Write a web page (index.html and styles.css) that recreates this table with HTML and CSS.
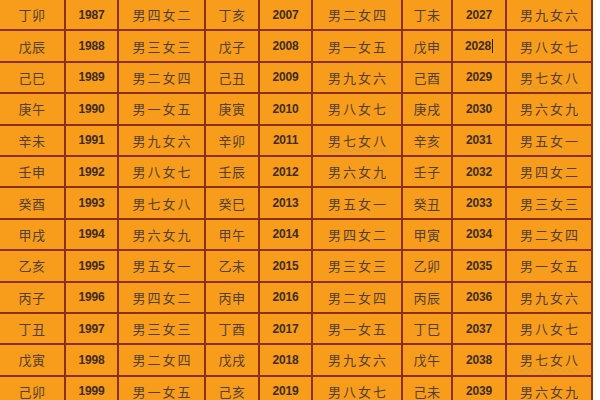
FILE: index.html
```html
<!DOCTYPE html>
<html lang="zh">
<head>
<meta charset="utf-8">
<title>生肖年份表</title>
<link rel="stylesheet" href="styles.css">
</head>
<body>
<div class="table">
  <div class="c gz">丁卯</div><div class="c yr">1987</div><div class="c fm">男四女二</div><div class="c gz">丁亥</div><div class="c yr">2007</div><div class="c fm">男二女四</div><div class="c gz">丁未</div><div class="c yr">2027</div><div class="c fm">男九女六</div>
  <div class="c gz">戊辰</div><div class="c yr">1988</div><div class="c fm">男三女三</div><div class="c gz">戊子</div><div class="c yr">2008</div><div class="c fm">男一女五</div><div class="c gz">戊申</div><div class="c yr"><span class="caret">2028</span></div><div class="c fm">男八女七</div>
  <div class="c gz">己巳</div><div class="c yr">1989</div><div class="c fm">男二女四</div><div class="c gz">己丑</div><div class="c yr">2009</div><div class="c fm">男九女六</div><div class="c gz">己酉</div><div class="c yr">2029</div><div class="c fm"><span class="sq">男七女八</span></div>
  <div class="c gz">庚午</div><div class="c yr">1990</div><div class="c fm">男一女五</div><div class="c gz">庚寅</div><div class="c yr">2010</div><div class="c fm">男八女七</div><div class="c gz">庚戌</div><div class="c yr">2030</div><div class="c fm">男六女九</div>
  <div class="c gz">辛未</div><div class="c yr">1991</div><div class="c fm">男九女六</div><div class="c gz">辛卯</div><div class="c yr">2011</div><div class="c fm"><span class="sq">男七女八</span></div><div class="c gz">辛亥</div><div class="c yr">2031</div><div class="c fm">男五女一</div>
  <div class="c gz">壬申</div><div class="c yr">1992</div><div class="c fm">男八女七</div><div class="c gz">壬辰</div><div class="c yr">2012</div><div class="c fm"><span class="sq">男六女九</span></div><div class="c gz">壬子</div><div class="c yr">2032</div><div class="c fm">男四女二</div>
  <div class="c gz">癸酉</div><div class="c yr">1993</div><div class="c fm">男七女八</div><div class="c gz">癸巳</div><div class="c yr">2013</div><div class="c fm">男五女一</div><div class="c gz">癸丑</div><div class="c yr">2033</div><div class="c fm">男三女三</div>
  <div class="c gz">甲戌</div><div class="c yr">1994</div><div class="c fm">男六女九</div><div class="c gz">甲午</div><div class="c yr">2014</div><div class="c fm">男四女二</div><div class="c gz">甲寅</div><div class="c yr">2034</div><div class="c fm">男二女四</div>
  <div class="c gz">乙亥</div><div class="c yr">1995</div><div class="c fm">男五女一</div><div class="c gz">乙未</div><div class="c yr">2015</div><div class="c fm">男三女三</div><div class="c gz">乙卯</div><div class="c yr">2035</div><div class="c fm">男一女五</div>
  <div class="c gz">丙子</div><div class="c yr">1996</div><div class="c fm">男四女二</div><div class="c gz">丙申</div><div class="c yr">2016</div><div class="c fm">男二女四</div><div class="c gz">丙辰</div><div class="c yr">2036</div><div class="c fm">男九女六</div>
  <div class="c gz">丁丑</div><div class="c yr">1997</div><div class="c fm">男三女三</div><div class="c gz">丁酉</div><div class="c yr">2017</div><div class="c fm">男一女五</div><div class="c gz">丁巳</div><div class="c yr">2037</div><div class="c fm">男八女七</div>
  <div class="c gz">戊寅</div><div class="c yr">1998</div><div class="c fm">男二女四</div><div class="c gz">戊戌</div><div class="c yr">2018</div><div class="c fm">男九女六</div><div class="c gz">戊午</div><div class="c yr">2038</div><div class="c fm"><span class="sq">男七女八</span></div>
  <div class="c gz">己卯</div><div class="c yr">1999</div><div class="c fm">男一女五</div><div class="c gz">己亥</div><div class="c yr">2019</div><div class="c fm">男八女七</div><div class="c gz">己未</div><div class="c yr">2039</div><div class="c fm"><span class="sq">男六女九</span></div>
</div>
</body>
</html>
```
FILE: styles.css
```css
html, body {
  margin: 0;
  padding: 0;
  background: #ffffff;
  width: 600px;
  height: 400px;
  overflow: hidden;
}

.table {
  display: grid;
  grid-template-columns: 64px 51px 85px 52px 51px 88px 48px 52px 84px;
  grid-auto-rows: 29.4px;
  column-gap: 2px;
  row-gap: 2px;
  width: 593px;
  padding-right: 2px;
  box-sizing: border-box;
  background: #8c3015;
}

.c {
  background: #f89c1c;
  display: flex;
  align-items: center;
  justify-content: center;
  color: #4a3a26;
  white-space: nowrap;
}

.gz {
  font-family: "Noto Sans CJK SC", "Noto Sans CJK JP", sans-serif;
  font-size: 13px;
  letter-spacing: 0.5px;
  font-weight: 400;
  color: #514030;
}

.fm {
  font-family: "Noto Sans CJK SC", "Noto Sans CJK JP", sans-serif;
  font-size: 13px;
  letter-spacing: 2px;
  font-weight: 400;
  color: #514030;
  padding-left: 2px;
}

.yr {
  font-family: "Liberation Sans", Arial, sans-serif;
  font-size: 12px;
  font-weight: 700;
  color: #3e2c1c;
  letter-spacing: -0.2px;
}

.sq {
  text-decoration: underline wavy #c8a040;
  text-decoration-thickness: 1px;
  text-underline-offset: 2px;
}

.caret {
  border-right: 1px solid #2a1a10;
  padding-right: 1px;
}
```
